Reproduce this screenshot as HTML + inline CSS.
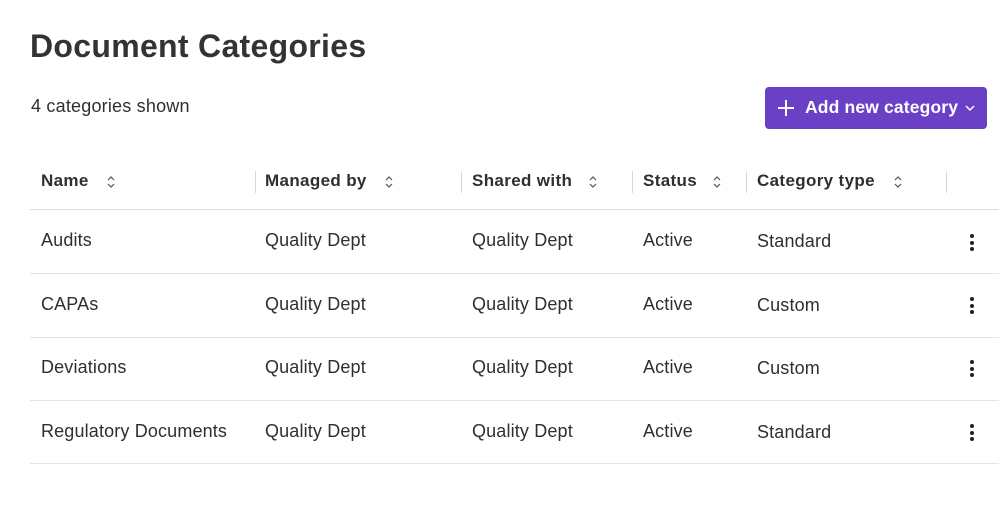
<!DOCTYPE html>
<html><head><style>
body{margin:0;width:999px;height:510px;background:#fff;font-family:"Liberation Sans",sans-serif;color:#2f2f33;position:relative;overflow:hidden}
.a{position:absolute;white-space:nowrap}
h1{position:absolute;left:30px;top:28px;margin:0;font-size:32px;font-weight:bold;color:#333;letter-spacing:0.3px}
.btn{position:absolute;left:765px;top:87px;width:222px;height:42px;background:#6a40c6;border-radius:4px;color:#fff;font-weight:bold;font-size:17.5px;letter-spacing:0.15px}
.hd{font-weight:bold;font-size:17px;top:171px;letter-spacing:0.35px}
.c{font-size:18px;letter-spacing:0.15px}
.line{position:absolute;left:30px;right:0;height:1px;background:#e4e4e4}
.div{position:absolute;top:171px;width:1px;height:22px;background:#d8d8d8}
.kb{position:absolute;left:970px;width:4px}
.kb i{display:block;width:4px;height:4px;border-radius:2px;background:#222;margin-bottom:2.5px}
</style></head><body>
<h1>Document Categories</h1>
<div class="a" style="left:31px;top:96px;font-size:18px;letter-spacing:0.2px">4 categories shown</div>
<div class="btn">
<svg class="a" style="left:12px;top:12px" width="18" height="18"><path d="M9 1V17M1 9H17" stroke="#fff" stroke-width="2"/></svg>
<span class="a" style="left:40px;top:10px">Add new category</span>
<svg class="a" style="left:200px;top:18px" width="10" height="7"><path d="M1 1L5 5L9 1" stroke="#fff" stroke-width="1.5" fill="none"/></svg>
</div>
<div class="a hd" style="left:41px">Name</div>
<div class="a hd" style="left:265px">Managed by</div>
<div class="a hd" style="left:472px">Shared with</div>
<div class="a hd" style="left:643px">Status</div>
<div class="a hd" style="left:757px">Category type</div>
<svg class="a" style="left:105px;top:174px" width="12" height="16"><path d="M3 6L6 3L9 6M3 10L6 13L9 10" stroke="#555" stroke-width="1.2" fill="none"/></svg>
<svg class="a" style="left:383px;top:174px" width="12" height="16"><path d="M3 6L6 3L9 6M3 10L6 13L9 10" stroke="#555" stroke-width="1.2" fill="none"/></svg>
<svg class="a" style="left:587px;top:174px" width="12" height="16"><path d="M3 6L6 3L9 6M3 10L6 13L9 10" stroke="#555" stroke-width="1.2" fill="none"/></svg>
<svg class="a" style="left:711px;top:174px" width="12" height="16"><path d="M3 6L6 3L9 6M3 10L6 13L9 10" stroke="#555" stroke-width="1.2" fill="none"/></svg>
<svg class="a" style="left:892px;top:174px" width="12" height="16"><path d="M3 6L6 3L9 6M3 10L6 13L9 10" stroke="#555" stroke-width="1.2" fill="none"/></svg>
<div class="div" style="left:255px"></div><div class="div" style="left:461px"></div><div class="div" style="left:632px"></div><div class="div" style="left:746px"></div><div class="div" style="left:946px"></div>
<div class="line" style="top:209px;background:#ddd"></div>
<div class="line" style="top:273px"></div>
<div class="line" style="top:337px"></div>
<div class="line" style="top:400px"></div>
<div class="line" style="top:463px;right:0"></div>

<div class="a c" style="left:41px;top:230px">Audits</div><div class="a c" style="left:265px;top:230px">Quality Dept</div><div class="a c" style="left:472px;top:230px">Quality Dept</div><div class="a c" style="left:643px;top:230px">Active</div><div class="a c" style="left:757px;top:231px">Standard</div>
<div class="kb" style="top:234px"><i></i><i></i><i></i></div>
<div class="a c" style="left:41px;top:294px">CAPAs</div><div class="a c" style="left:265px;top:294px">Quality Dept</div><div class="a c" style="left:472px;top:294px">Quality Dept</div><div class="a c" style="left:643px;top:294px">Active</div><div class="a c" style="left:757px;top:295px">Custom</div>
<div class="kb" style="top:297px"><i></i><i></i><i></i></div>
<div class="a c" style="left:41px;top:357px">Deviations</div><div class="a c" style="left:265px;top:357px">Quality Dept</div><div class="a c" style="left:472px;top:357px">Quality Dept</div><div class="a c" style="left:643px;top:357px">Active</div><div class="a c" style="left:757px;top:358px">Custom</div>
<div class="kb" style="top:360px"><i></i><i></i><i></i></div>
<div class="a c" style="left:41px;top:421px">Regulatory Documents</div><div class="a c" style="left:265px;top:421px">Quality Dept</div><div class="a c" style="left:472px;top:421px">Quality Dept</div><div class="a c" style="left:643px;top:421px">Active</div><div class="a c" style="left:757px;top:422px">Standard</div>
<div class="kb" style="top:424px"><i></i><i></i><i></i></div>
</body></html>
